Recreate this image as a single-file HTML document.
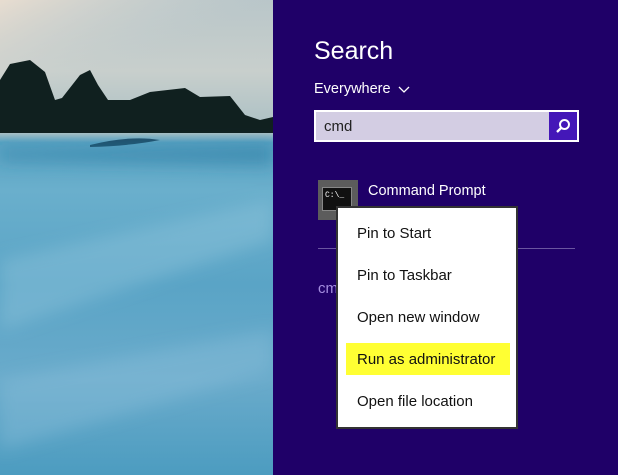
<!DOCTYPE html>
<html><head><style>
*{margin:0;padding:0;box-sizing:border-box}
body{width:618px;height:475px;overflow:hidden;position:relative;font-family:"Liberation Sans",sans-serif;background:#1f0068}
.bg{position:absolute;left:0;top:0;width:273px;height:475px;background:linear-gradient(180deg,#b9c6c9 0%,#c8cfcc 15%,#a9bfc4 28%,#58a2c2 30%,#6aafcc 40%,#5aa4c6 60%,#6aabcb 80%,#4c9cc0 100%)}
.panel{position:absolute;left:273px;top:0;width:345px;height:475px;background:#1f0068}
.t{position:absolute;color:#fff;white-space:nowrap}
.m{font-size:15px;color:#111}
</style></head><body>
<div class="bg">
<svg width="273" height="475" style="position:absolute;left:0;top:0">
<defs><linearGradient id="s" x1="0" y1="0" x2="1" y2="1"><stop offset="0" stop-color="#e8ddd0"/><stop offset="0.5" stop-color="#c5cfd0" stop-opacity="0"/></linearGradient>
<filter id="b"><feGaussianBlur stdDeviation="8"/></filter></defs>
<rect width="273" height="130" fill="url(#s)"/>
<path d="M0,80 L10,64 L30,60 L45,72 L55,100 L62,98 L80,75 L90,70 L98,85 L108,100 L130,100 L150,92 L185,88 L200,97 L230,96 L245,115 L260,120 L273,117 L273,133 L0,133Z" fill="#10201f"/>
<path d="M90,145 Q130,135 160,140 Q130,146 90,147Z" fill="#1e4f6a"/>
<g filter="url(#b)">
<path d="M0,150 L273,145 L273,165 L0,160Z" fill="#2d7fa5" opacity="0.6"/>
<path d="M0,260 L273,200 L273,240 L0,330Z" fill="#9ccae0" opacity="0.35"/>
<path d="M0,380 L273,330 L273,370 L0,450Z" fill="#8fc3dc" opacity="0.35"/>
</g>
</svg>
</div>
<div class="panel"></div>
<div class="t" style="left:314px;top:37px;font-size:25px">Search</div>
<div class="t" style="left:314px;top:81px;font-size:14.5px">Everywhere</div>
<svg style="position:absolute;left:398px;top:86px" width="12" height="8"><path d="M1,1 L6,6 L11,1" stroke="#fff" stroke-width="1.3" fill="none"/></svg>
<div style="position:absolute;left:314px;top:110px;width:265px;height:32px;border:2px solid #fff;background:#d3cde3"></div>
<div class="t" style="left:324px;top:118px;font-size:15px;color:#222">cmd</div>
<div style="position:absolute;left:549px;top:112px;width:28px;height:28px;background:#4417b8"></div>
<svg style="position:absolute;left:553px;top:116px" width="20" height="20"><circle cx="11.5" cy="8.5" r="4.5" stroke="#fff" stroke-width="2" fill="none"/><path d="M8.5,11.5 L4,16" stroke="#fff" stroke-width="2.3"/></svg>
<div style="position:absolute;left:318px;top:180px;width:40px;height:40px;background:#5c5c5c"></div>
<div style="position:absolute;left:322px;top:187px;width:30px;height:24px;background:#111;border:1px solid #888"></div>
<div class="t" style="left:325px;top:191px;font-size:8px;font-family:'Liberation Mono',monospace">C:\_</div>
<div class="t" style="left:368px;top:183px;font-size:14.5px">Command Prompt</div>
<div style="position:absolute;left:318px;top:248px;width:257px;height:1px;background:#6a55a0"></div>
<div class="t" style="left:318px;top:280px;font-size:15px;color:#a58de0">cm</div>
<div style="position:absolute;left:336px;top:206px;width:182px;height:223px;background:#fff;border:2px solid #333"></div>
<div class="t m" style="left:357px;top:225px">Pin to Start</div>
<div class="t m" style="left:357px;top:267px">Pin to Taskbar</div>
<div class="t m" style="left:357px;top:309px">Open new window</div>
<div style="position:absolute;left:346px;top:343px;width:164px;height:32px;background:#ffff33"></div>
<div class="t m" style="left:357px;top:351px">Run as administrator</div>
<div class="t m" style="left:357px;top:393px">Open file location</div>
</body></html>
